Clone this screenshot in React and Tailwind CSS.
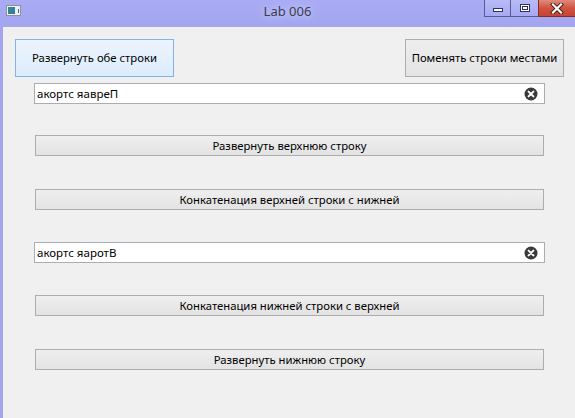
import React from 'react'

const font = { fontFamily: '"Noto Sans", "Open Sans", sans-serif' }

function ClearIcon() {
  return (
    <svg width="14" height="14" viewBox="0 0 14 14" className="shrink-0">
      <circle cx="7" cy="7" r="6.5" fill="#3a3a3a" />
      <path d="M4.6 4.6 L9.4 9.4 M9.4 4.6 L4.6 9.4" stroke="#fff" strokeWidth="2" strokeLinecap="round" />
    </svg>
  )
}

function CloseGlyph() {
  return (
    <svg width="14" height="11" viewBox="0 0 14 11">
      <path d="M3 1.5 L11 9.5 M11 1.5 L3 9.5" stroke="#4a1810" strokeWidth="4" strokeLinecap="square" />
      <path d="M3 1.5 L11 9.5 M11 1.5 L3 9.5" stroke="#fff" strokeWidth="2.2" strokeLinecap="square" />
    </svg>
  )
}

function LineEdit({ value }) {
  return (
    <div className="flex h-[21px] items-center border border-[#abadb3] bg-white pl-[2px] pr-[6px]">
      <span className="flex-1 text-[11.5px] leading-none text-black">{value}</span>
      <ClearIcon />
    </div>
  )
}

function PushButton({ children }) {
  return (
    <div className="px-[1px]">
      <button className="flex h-[21px] w-full items-center justify-center border border-[#adadad] bg-gradient-to-b from-[#efefef] to-[#e3e3e3] text-[11.3px] leading-none text-black">
        {children}
      </button>
    </div>
  )
}

function TitleBar() {
  return (
    <div className="relative flex h-[27px] items-start bg-gradient-to-b from-[#a9acf4] to-[#a3a6ef]">
      <div className="ml-[6px] mt-[5px] flex h-[11px] w-[15px] items-center gap-[1px] border border-[#8f8f9a] bg-[#eef0f4] px-[1px]">
        <div className="h-[7px] w-[8px] bg-gradient-to-br from-[#2f8f8a] to-[#3f6fb0]" />
        <div className="ml-[2px] h-[4px] w-[1px] bg-[#2f6f7a]" />
      </div>
      <div className="absolute left-0 right-0 top-[5px] text-center text-[13px] leading-none text-[#3b3d50] [text-shadow:0_0_6px_#c8cafc,0_0_10px_#c8cafc]">
        Lab 006
      </div>
      <div className="ml-auto flex h-[17px]">
        <div className="flex h-full w-[27px] items-center justify-center border border-t-0 border-[#565a9a] bg-gradient-to-b from-[#b8bbf6] to-[#a6a9f0]">
          <div className="mt-[4px] h-[4px] w-[10px] border border-[#2f3160] bg-white" />
        </div>
        <div className="flex h-full w-[27px] items-center justify-center border-b border-[#565a9a] bg-gradient-to-b from-[#b8bbf6] to-[#a6a9f0]">
          <div className="flex h-[8px] w-[10px] items-center justify-center border border-[#2f3160] bg-white">
            <div className="h-[4px] w-[6px] border border-[#2f3160]" />
          </div>
        </div>
        <div className="flex h-full w-[37px] items-center justify-center border border-t-0 border-r-0 border-[#8a2a22] bg-gradient-to-b from-[#e08a7c] via-[#d0533f] to-[#c44433]">
          <CloseGlyph />
        </div>
      </div>
    </div>
  )
}

export default function App() {
  return (
    <div className="flex h-[418px] w-[575px] flex-col overflow-hidden bg-[#a3a6ef]" style={font}>
      <TitleBar />
      <div className="flex flex-1 pl-[3px]">
        <div className="flex flex-1 flex-col bg-[#f0f0f0]">
          <div className="mt-[12px] flex justify-between pl-[12px] pr-[11px]">
            <button className="h-[38px] w-[159px] border border-[#7eb4ea] bg-gradient-to-b from-[#ecf4fc] to-[#dcecfc] text-[11.3px] text-black">
              Развернуть обе строки
            </button>
            <button className="h-[38px] w-[159px] border border-[#adadad] bg-gradient-to-b from-[#eeeeee] to-[#e4e4e4] text-[11.3px] text-black">
              Поменять строки местами
            </button>
          </div>
          <div className="ml-[31px] mt-[6px] flex w-[511px] flex-col">
            <LineEdit value="акортс яавреП" />
            <div className="mt-[31px]">
              <PushButton>Развернуть верхнюю строку</PushButton>
            </div>
            <div className="mt-[33px]">
              <PushButton>Конкатенация верхней строки с нижней</PushButton>
            </div>
            <div className="mt-[32px]">
              <LineEdit value="акортс яаротВ" />
            </div>
            <div className="mt-[32px]">
              <PushButton>Конкатенация нижней строки с верхней</PushButton>
            </div>
            <div className="mt-[33px]">
              <PushButton>Развернуть нижнюю строку</PushButton>
            </div>
          </div>
        </div>
      </div>
    </div>
  )
}
